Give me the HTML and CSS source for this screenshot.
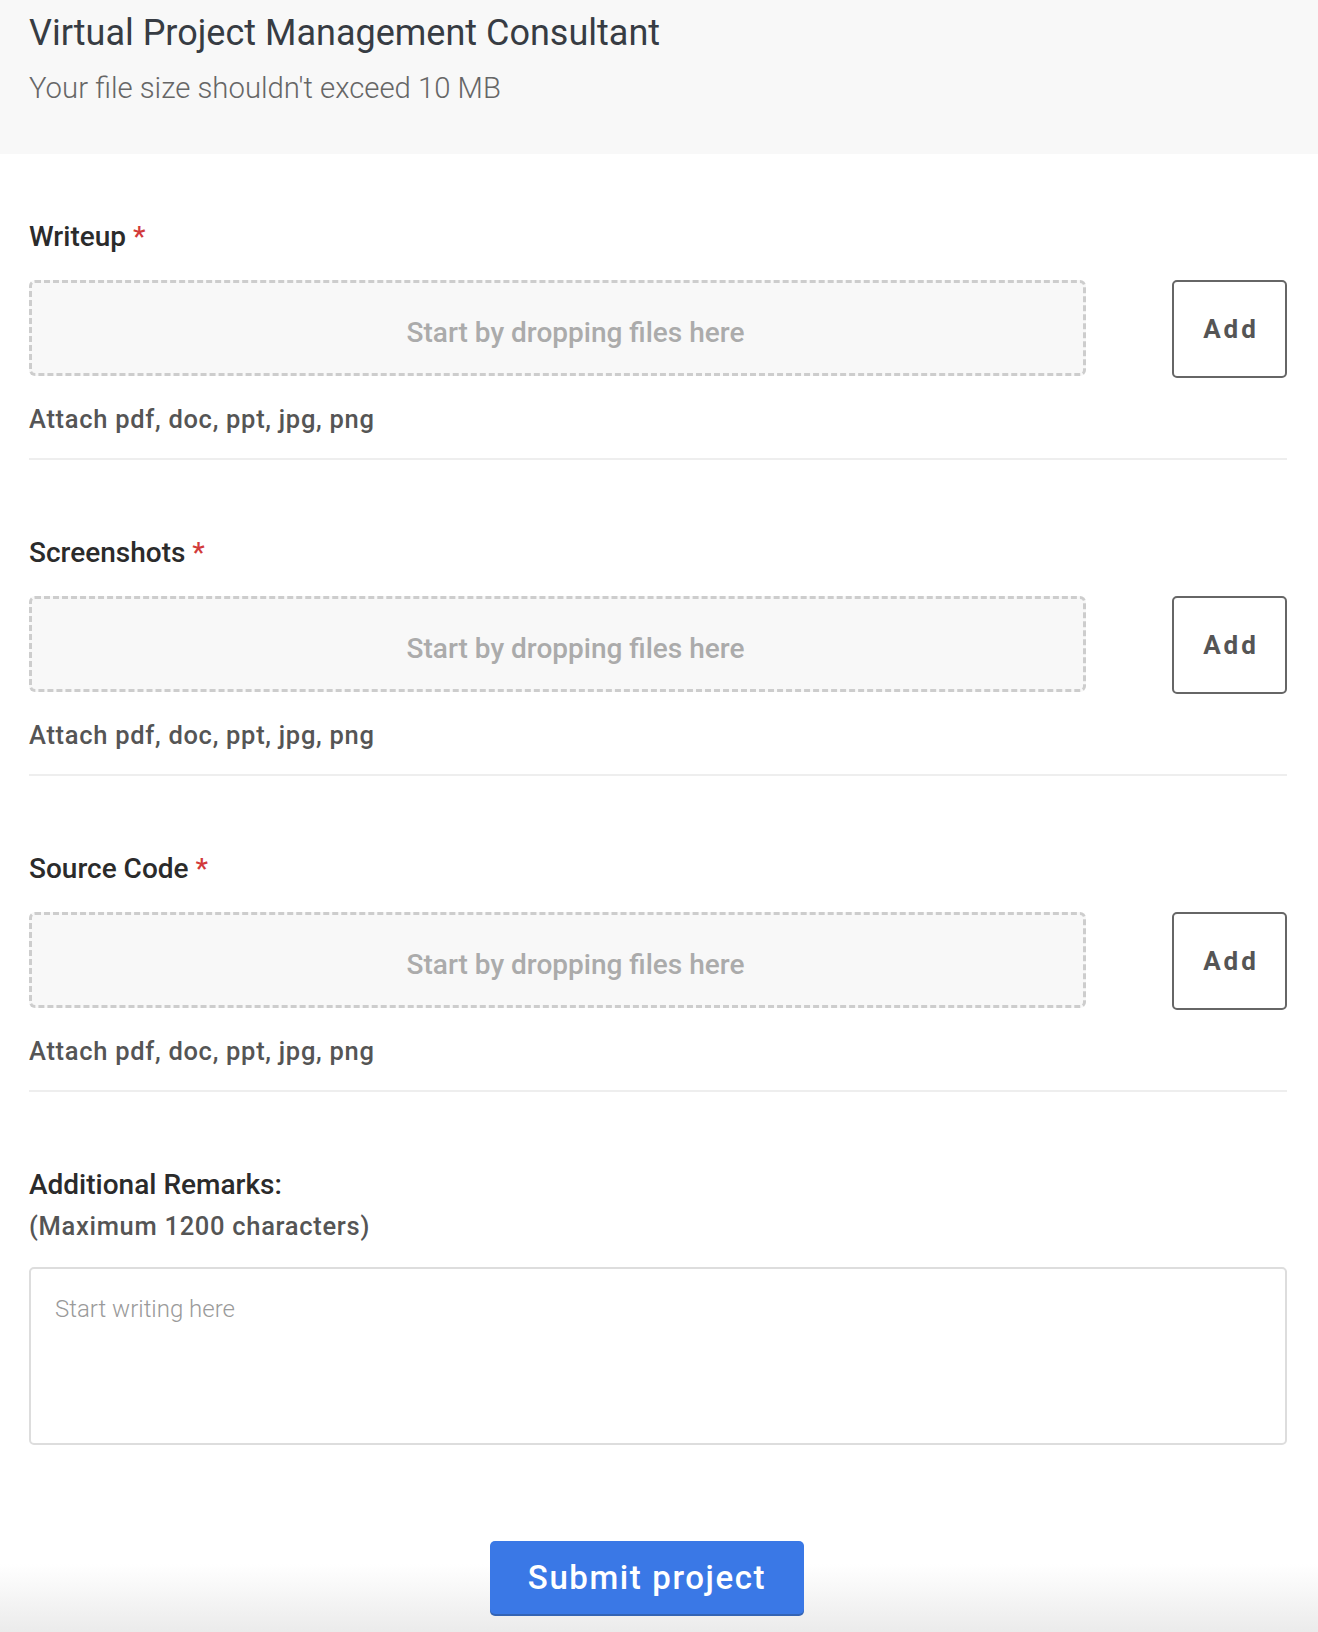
FILE: index.html
```html
<!DOCTYPE html>
<html lang="en">
<head>
<meta charset="utf-8">
<title>Virtual Project Management Consultant</title>
<link rel="stylesheet" href="styles.css">
</head>
<body>
<header class="head">
  <h1 class="title">Virtual Project Management Consultant</h1>
  <p class="subtitle">Your file size shouldn't exceed 10 MB</p>
</header>
<main class="content">
  <section class="upload">
    <div class="label">Writeup <span class="req">*</span></div>
    <div class="row">
      <div class="drop">Start by dropping files here</div>
      <button class="add">Add</button>
    </div>
    <div class="hint">Attach pdf, doc, ppt, jpg, png</div>
  </section>
  <section class="upload">
    <div class="label">Screenshots <span class="req">*</span></div>
    <div class="row">
      <div class="drop">Start by dropping files here</div>
      <button class="add">Add</button>
    </div>
    <div class="hint">Attach pdf, doc, ppt, jpg, png</div>
  </section>
  <section class="upload">
    <div class="label">Source Code <span class="req">*</span></div>
    <div class="row">
      <div class="drop">Start by dropping files here</div>
      <button class="add">Add</button>
    </div>
    <div class="hint">Attach pdf, doc, ppt, jpg, png</div>
  </section>
  <section class="remarks">
    <div class="label">Additional Remarks:</div>
    <div class="hint max">(Maximum 1200 characters)</div>
    <textarea class="area" placeholder="Start writing here"></textarea>
  </section>
</main>
<footer class="foot">
  <button class="submit">Submit project</button>
</footer>
</body>
</html>
```

FILE: styles.css
```css
* { box-sizing: border-box; }
html, body { margin: 0; padding: 0; background: #fff; }
body { font-family: Roboto, "Liberation Sans", sans-serif; height: 1632px; overflow: hidden; }

.head {
  background: #f8f8f8;
  height: 154px;
  padding: 12px 31px 0 29px;
}
.title {
  margin: 0;
  font-size: 36px;
  line-height: 42px;
  font-weight: 400;
  color: #373c43;
}
.subtitle {
  margin: 17px 0 0;
  font-size: 29.3px;
  line-height: 34px;
  font-weight: 300;
  color: #666;
}

.content { padding: 0 31px 0 29px; }

.upload {
  padding: 78px 0 25px;
  border-bottom: 2px solid #eeeeee;
}
.upload:first-child { padding-top: 68px; }

.label {
  font-size: 28px;
  line-height: 30px;
  font-weight: 500;
  color: #2b2b2b;
}
.req { color: #d23a3a; }

.row {
  display: flex;
  align-items: flex-start;
  gap: 86px;
  margin-top: 28px;
}
.drop {
  flex: 1;
  height: 96px;
  border: 3px dashed #cdcdcd;
  border-radius: 6px;
  background: #f8f8f8;
  display: flex;
  align-items: center;
  justify-content: center;
  padding: 8px 0 0 36px;
  font-size: 28px;
  font-weight: 500;
  color: #ababab;
}
.add {
  width: 115px;
  height: 98px;
  border: 2px solid #666;
  border-radius: 5px;
  background: #fff;
  font-family: inherit;
  font-size: 26px;
  font-weight: 700;
  letter-spacing: 3px;
  color: #555;
  padding: 0 0 0 3px;
}

.hint {
  margin-top: 27px;
  font-size: 25.5px;
  line-height: 28px;
  font-weight: 500;
  color: #555;
  letter-spacing: 0.7px;
}

.remarks { padding-top: 78px; }
.hint.max { margin-top: 12px; }
.area {
  display: block;
  width: 100%;
  height: 178px;
  margin-top: 27px;
  border: 2px solid #dddddd;
  border-radius: 5px;
  padding: 26px 24px;
  font-family: inherit;
  font-size: 24px;
  line-height: 28px;
  font-weight: 300;
  color: #333;
  resize: none;
  outline: none;
}
.area::placeholder { color: #9a9a9a; }

.foot {
  display: flex;
  justify-content: center;
  padding: 96px 24px 18px 0;
  background: linear-gradient(to bottom, #fff 0, #fff calc(100% - 68px), #ebebeb 100%);
}
.submit {
  width: 314px;
  height: 73px;
  border: 0;
  border-radius: 5px;
  background: #3a78e6;
  box-shadow: 0 2px 0 #3464b4;
  color: #fff;
  font-family: inherit;
  font-size: 33px;
  font-weight: 500;
  letter-spacing: 1.6px;
}
```
